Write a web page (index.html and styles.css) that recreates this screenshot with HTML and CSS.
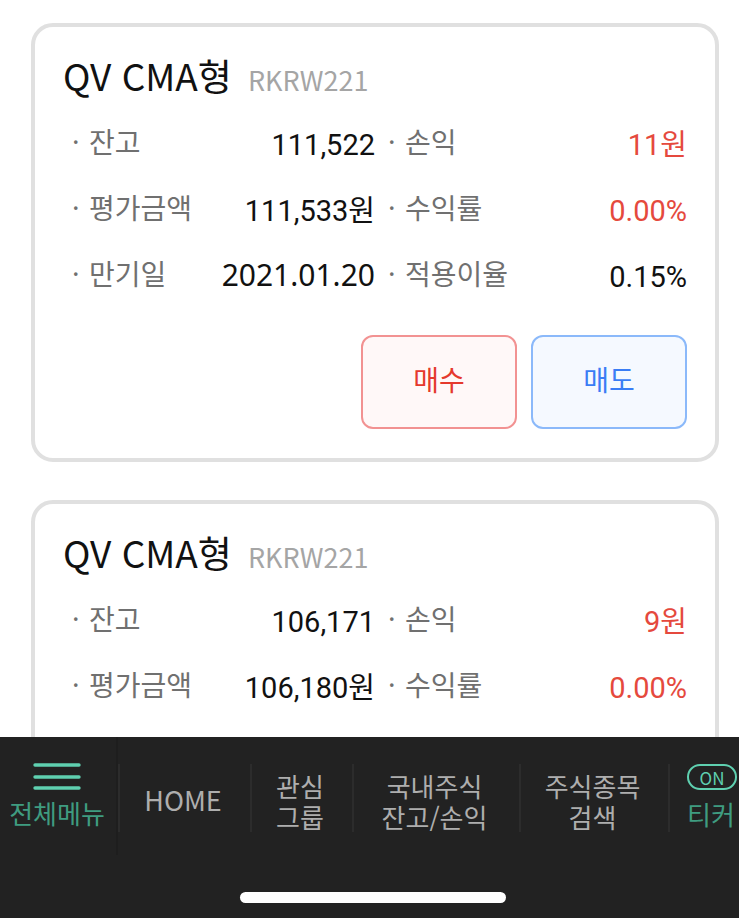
FILE: index.html
```html
<!DOCTYPE html>
<html lang="ko">
<head>
	<meta charset="UTF-8">
	<meta name="viewport" content="width=device-width, initial-scale=1.0">
	<title>CMA 잔고</title>
	<link rel="stylesheet" href="styles.css">
</head>
<body>
	<main class="list">
		<section class="card">
			<h2>QV CMA형 <span class="code">RKRW221</span></h2>
			<dl class="info">
				<div class="item"><dt>잔고</dt><dd>111,522</dd></div>
				<div class="item right"><dt>손익</dt><dd class="up">11원</dd></div>
				<div class="item"><dt>평가금액</dt><dd>111,533원</dd></div>
				<div class="item right"><dt>수익률</dt><dd class="up">0.00%</dd></div>
				<div class="item"><dt>만기일</dt><dd class="date">2021.01.20</dd></div>
				<div class="item right"><dt>적용이율</dt><dd>0.15%</dd></div>
			</dl>
			<div class="btns">
				<button type="button" class="btn buy">매수</button>
				<button type="button" class="btn sell">매도</button>
			</div>
		</section>

		<section class="card">
			<h2>QV CMA형 <span class="code">RKRW221</span></h2>
			<dl class="info">
				<div class="item"><dt>잔고</dt><dd>106,171</dd></div>
				<div class="item right"><dt>손익</dt><dd class="up">9원</dd></div>
				<div class="item"><dt>평가금액</dt><dd>106,180원</dd></div>
				<div class="item right"><dt>수익률</dt><dd class="up">0.00%</dd></div>
				<div class="item"><dt>만기일</dt></div>
				<div class="item right"><dt>적용이율</dt></div>
			</dl>
		</section>
	</main>

	<footer class="bottom">
		<nav class="tabs">
			<a href="#" class="tab all">
				<svg class="menu-icon" width="48" height="28" viewBox="0 0 48 28" aria-hidden="true">
					<path d="M2 3H46M2 15H46M2 26H46" stroke="#5fd0b0" stroke-width="3.400" stroke-linecap="round"/>
				</svg>
				<span>전체메뉴</span>
			</a>
			<a href="#" class="tab home">HOME</a>
			<a href="#" class="tab">관심<br>그룹</a>
			<a href="#" class="tab">국내주식<br>잔고/손익</a>
			<a href="#" class="tab">주식종목<br>검색</a>
			<a href="#" class="tab ticker">
				<span class="on">ON</span>
				<span>티커</span>
			</a>
		</nav>
		<div class="home-bar"></div>
	</footer>
</body>
</html>
```
FILE: styles.css
```css
*{
	margin: 0;
	padding: 0;
	box-sizing: border-box;
}
body{
	display: flex;
	flex-direction: column;
	height: 100vh;
	overflow: hidden;
	background-color: #fff;
	color: #111;
	font-family: "Noto Sans CJK KR", sans-serif;
}
.list{
	flex: 1;
	min-height: 0;
	overflow: hidden;
	padding: 23px 20px 0 31px;
}
.card{
	border: 4px solid #e0e0e0;
	border-radius: 22px;
	padding: 22px 28px 29px;
	margin-bottom: 38px;
}
.card h2{
	display: flex;
	align-items: baseline;
	gap: 16px;
	font-size: 37px;
	font-weight: 400;
	line-height: 52px;
}
.code{
	color: #a5a5a5;
	font-size: 27px;
}
.info{
	display: grid;
	grid-template-columns: 1fr 1fr;
	padding-top: 3px;
}
.item{
	display: flex;
	justify-content: space-between;
	height: 66px;
	padding-left: 9px;
}
.item.right{
	padding-left: 13px;
}
.item dt{
	display: flex;
	color: #707070;
	font-size: 28px;
	line-height: 64px;
}
.item dt::before{
	content: "·";
	width: 17px;
	font-family: "Noto Sans", sans-serif;
}
.item dd{
	font-family: Roboto, "Noto Sans CJK KR", sans-serif;
	font-size: 29px;
	line-height: 72px;
}
.item dd.date{
	font-family: "Noto Sans", sans-serif;
	font-size: 30px;
	line-height: 68px;
}
.item dd.up{
	color: #e5493d;
}
.btns{
	display: flex;
	justify-content: flex-end;
	gap: 14px;
	padding-top: 28px;
}
.btn{
	width: 25%;
	height: 94px;
	padding-bottom: 6px;
	border: 2px solid;
	border-radius: 12px;
	font-family: "Noto Sans CJK KR", sans-serif;
	font-size: 28px;
	font-weight: 400;
}
.buy{
	color: #e5392d;
	background-color: #fff8f8;
	border-color: #f29292;
}
.sell{
	color: #3a7df5;
	background-color: #f5f9ff;
	border-color: #8bb9fa;
}
.bottom{
	background-color: #222;
	padding-bottom: 15px;
}
.tabs{
	display: grid;
	grid-template-columns: 118fr 132fr 102fr 167fr 149fr 71fr;
	height: 118px;
	margin-bottom: 37px;
	overflow: hidden;
}
.tab{
	display: flex;
	flex-direction: column;
	align-items: center;
	justify-content: center;
	min-width: 0;
	height: 68px;
	margin-top: 27px;
	padding: 5px 4px 0 0;
	border-left: 2px solid #2c2c2c;
	color: #aeaeae;
	font-size: 26px;
	line-height: 31px;
	text-align: center;
	text-decoration: none;
	white-space: nowrap;
}
.all{
	height: 118px;
	margin-top: 0;
	padding: 25px 2px 0 0;
	justify-content: flex-start;
	gap: 7px;
	border-left: 0;
	border-right: 2px solid #1e1e1e;
	color: #3f9c80;
}
.home{
	padding-top: 2px;
	font-size: 27px;
}
.ticker{
	justify-content: flex-start;
	align-items: flex-start;
	gap: 8px;
	padding: 0 0 0 17px;
	color: #3f9c80;
}
.on{
	width: 50px;
	height: 26px;
	border: 2px solid #5fd0b0;
	border-radius: 13px;
	color: #5fd0b0;
	font-size: 17px;
	line-height: 23px;
}
.home-bar{
	width: 36%;
	height: 11px;
	margin-left: 32.5%;
	border-radius: 6px;
	background-color: #fff;
}
```
